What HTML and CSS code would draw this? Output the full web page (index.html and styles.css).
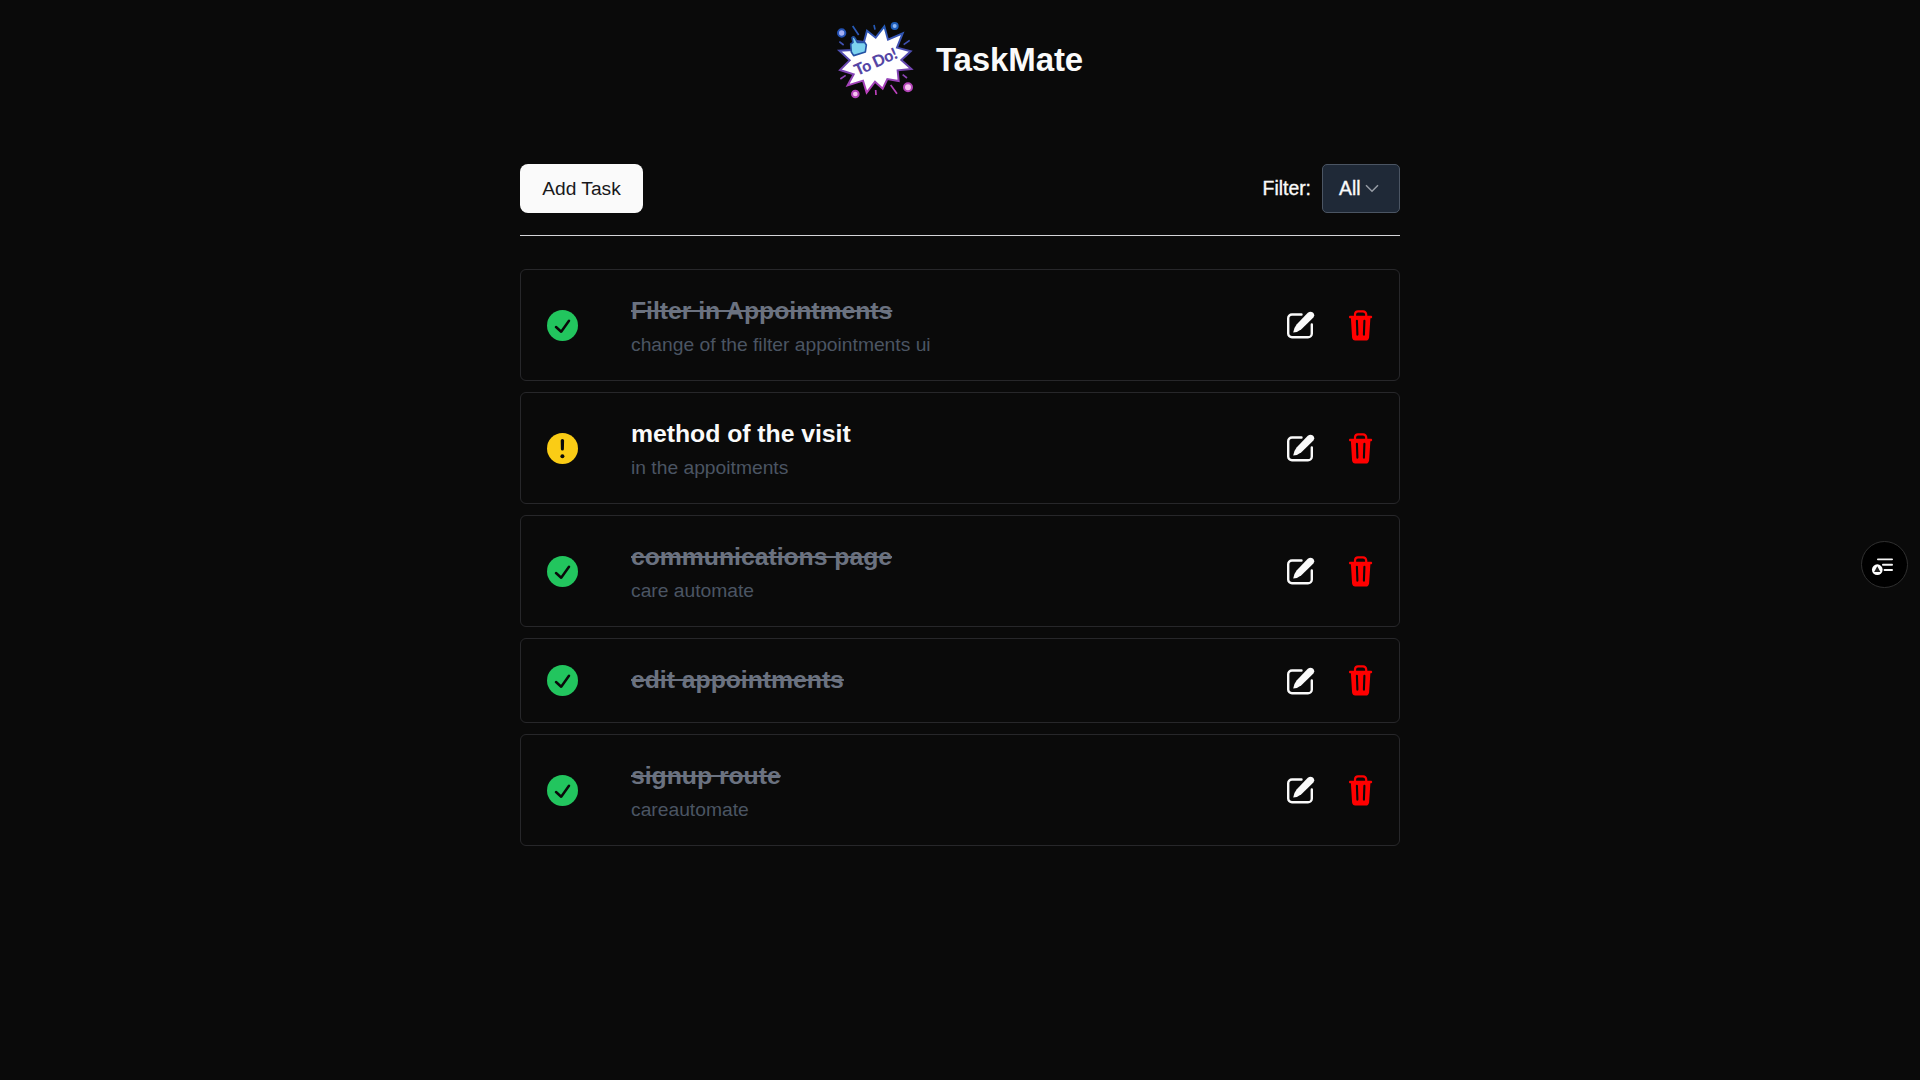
FILE: index.html
```html
<!DOCTYPE html>
<html lang="en">
<head>
<meta charset="utf-8">
<title>TaskMate</title>
<link rel="stylesheet" href="styles.css">
</head>
<body>
<svg class="sprite" aria-hidden="true">
  <symbol id="check" viewBox="0 0 31 31"><circle cx="15.5" cy="15.5" r="15.5" fill="#22c55e"/><path d="M9 17L14.2 21.7L22 10.8" fill="none" stroke="#0a0a0a" stroke-width="2.5" stroke-linecap="round" stroke-linejoin="round"/></symbol>
  <symbol id="alert" viewBox="0 0 31 31"><circle cx="15.5" cy="15.5" r="15.5" fill="#facc15"/><path d="M13.7 7.6a1.7 1.7 0 0 1 3.4 0L16.9 16a1.5 1.5 0 0 1-3 0z" fill="#0a0a0a"/><circle cx="15.4" cy="23.2" r="2" fill="#0a0a0a"/></symbol>
  <symbol id="edit" viewBox="0 0 28 28"><path d="M14.5 3.5H5A3.8 3.8 0 0 0 1.2 7.3v15.2A3.8 3.8 0 0 0 5 26.3h16a3.8 3.8 0 0 0 3.8-3.8V13.5" fill="none" stroke="#fafafa" stroke-width="2.4" stroke-linecap="round"/><path d="M6.2 21.6Q6.8 16.7 9.8 13.2L20.8 1.8Q23.2-.3 25.9 1.5Q28.3 3.8 26.4 6.4L14.4 18.2Q10.8 21.2 6.2 21.6Z" fill="#fafafa"/></symbol>
  <symbol id="trash" viewBox="0 0 24 31"><path d="M6 6.5V4.4Q6.2 1.3 9 1.3h5Q17 1.5 17.2 4.4V6.5" fill="none" stroke="red" stroke-width="2.2"/><path d="M.8 5.8h21.6q.8.2.8 1.1t-.8 1.3H21.4L20.1 27.4Q19.5 30.5 17 30.5H6.2Q3.5 30.3 3.1 27.4L1.9 8.2H.8Q0 8 0 6.9t.8-1.1z" fill="red"/><path d="M7.9 10.8L8.4 24.6M15.4 10.8L14.9 24.6" fill="none" stroke="#0a0a0a" stroke-width="2.1" stroke-linecap="round"/></symbol>
</svg>

<header class="header">
  <svg class="logo" viewBox="48 30 240 240">
    <defs>
      <linearGradient id="ray" gradientUnits="userSpaceOnUse" x1="0" y1="35" x2="0" y2="265"><stop offset="0" stop-color="#1d5db8"/><stop offset=".5" stop-color="#5b48ae"/><stop offset="1" stop-color="#cf3fc0"/></linearGradient>
    </defs>
    <path d="M141 62L167 83L193 49L204 89L248 70L231 113L272 124L244 150L274 177L233 181L236 213L202 207L188 236L165 215L140 248L129 212L83 226L101 193L60 180L89 151L58 122L98 120L100 92L132 96Z" fill="#fff" stroke="url(#ray)" stroke-width="6"/>
    <path d="M92 102L99 97L96 83Q101 77 106 86L112 97L134 97L139 105L136 126L101 137L94 126Z" fill="#7dd3ef" stroke="#2452a4" stroke-width="5" stroke-linejoin="round"/>
    <g fill="none" stroke="url(#ray)" stroke-width="5"><path d="M98 48L116 75M162 45L165 59M58 95L71 105M251 104L269 91M61 207L77 196M167 240L168 255M212 225L231 251M248 194L261 204"/></g>
    <circle cx="65" cy="69" r="11" fill="#a5b0f5" stroke="#2452b4" stroke-width="6"/>
    <circle cx="224" cy="48" r="9" fill="#8bb6f2" stroke="#1d5db8" stroke-width="6"/>
    <circle cx="106" cy="252" r="10" fill="#f6c4f0" stroke="#b344b8" stroke-width="6"/>
    <circle cx="264" cy="232" r="12" fill="#f6c4f0" stroke="#b344b8" stroke-width="6"/>
    <text class="logo-text" transform="translate(112 198) rotate(-24)" textLength="136">To Do!</text>
  </svg>
  <h1 class="brand">TaskMate</h1>
</header>

<main class="container">
  <div class="toolbar">
    <button class="add">Add Task</button>
    <div class="filter">
      <span>Filter:</span>
      <button class="select">All<svg class="chevron" viewBox="0 0 14 9"><path d="M1 1.2L7 7.3L13 1.2"/></svg></button>
    </div>
  </div>

  <ul class="tasks">
    <li class="task done"><svg class="status"><use href="#check"/></svg><div class="body"><h2>Filter in Appointments</h2><p>change of the filter appointments ui</p></div><svg class="edit"><use href="#edit"/></svg><svg class="trash"><use href="#trash"/></svg></li>
    <li class="task"><svg class="status"><use href="#alert"/></svg><div class="body"><h2>method of the visit</h2><p>in the appoitments</p></div><svg class="edit"><use href="#edit"/></svg><svg class="trash"><use href="#trash"/></svg></li>
    <li class="task done"><svg class="status"><use href="#check"/></svg><div class="body"><h2>communications page</h2><p>care automate</p></div><svg class="edit"><use href="#edit"/></svg><svg class="trash"><use href="#trash"/></svg></li>
    <li class="task done"><svg class="status"><use href="#check"/></svg><div class="body"><h2>edit appointments</h2></div><svg class="edit"><use href="#edit"/></svg><svg class="trash"><use href="#trash"/></svg></li>
    <li class="task done"><svg class="status"><use href="#check"/></svg><div class="body"><h2>signup route</h2><p>careautomate</p></div><svg class="edit"><use href="#edit"/></svg><svg class="trash"><use href="#trash"/></svg></li>
  </ul>
</main>

<button class="widget" aria-label="Contents"><svg viewBox="0 0 70 70"><g stroke="#f4f4f4" stroke-width="6" fill="none"><path d="M22 17H67M38 34H67M43 51H67" stroke-linecap="round"/></g><circle cx="20" cy="50" r="17" fill="#fff"/><path d="M20 39L30 57H10Z" fill="#222"/></svg></button>
</body>
</html>
```
FILE: styles.css
```css
* { box-sizing: border-box; margin: 0; padding: 0; }
html { font-size: 17.6px; }
body {
  min-height: 100vh;
  background: #0a0a0a;
  color: #fafafa;
  font-family: "Liberation Sans", Arial, sans-serif;
}
button { font: inherit; color: inherit; border: 0; }
.sprite { position: absolute; width: 0; height: 0; }

.header {
  display: flex;
  justify-content: center;
  align-items: center;
  gap: 20px;
  height: 120px;
  padding-right: 1px;
}
.logo { width: 80px; height: 80px; }
.logo-text { font: 900 48px Lato, sans-serif; fill: #5546a5; }
.brand { font-size: 33px; line-height: 40px; letter-spacing: -0.1px; }

.container { width: 880px; margin: 44px auto 0; }
.toolbar {
  display: flex;
  justify-content: space-between;
  align-items: center;
  height: 72px;
  padding-bottom: 22px;
  border-bottom: 1px solid #d4d4d8;
  font-size: 19.36px;
}
.add {
  width: 123px;
  height: 49px;
  border-radius: 8px;
  background: #fafafa;
  color: #18181b;
  font-size: 19.2px;
}
.filter {
  display: flex;
  align-items: center;
  gap: 11px;
  -webkit-text-stroke: 0.35px #fafafa;
}
.select {
  display: flex;
  align-items: center;
  gap: 4px;
  width: 78px;
  height: 49px;
  padding-left: 16px;
  border: 1px solid #4b5563;
  border-radius: 5px;
  background: #1f2937;
}
.chevron { width: 14px; height: 9px; fill: none; stroke: #969ca5; stroke-width: 1.5; }

.tasks {
  display: grid;
  gap: 11px;
  margin-top: 33px;
  list-style: none;
}
.task {
  display: flex;
  align-items: center;
  min-height: 85px;
  padding: 0 26px;
  border: 1px solid #27272a;
  border-radius: 6px;
}
.status { width: 31px; height: 31px; }
.body {
  flex: 1;
  align-self: flex-start;
  margin-left: 53px;
  padding: 22px 0 20px;
}
.body h2 { font-size: 24.8px; line-height: 37px; letter-spacing: -0.04px; }
.body p { font-size: 19.25px; line-height: 31px; color: #4b5563; }
.done h2 { color: #6b7280; text-decoration: line-through; }
.edit { width: 28px; height: 28px; }
.trash { width: 24px; height: 31px; margin-left: 34px; }

.widget {
  position: fixed;
  top: 541px;
  right: 12px;
  display: grid;
  place-items: center;
  width: 47px;
  height: 47px;
  border: 1px solid #303030;
  border-radius: 50%;
  background: #000;
}
.widget svg { width: 22px; height: 22px; margin-right: 6px; }
```
